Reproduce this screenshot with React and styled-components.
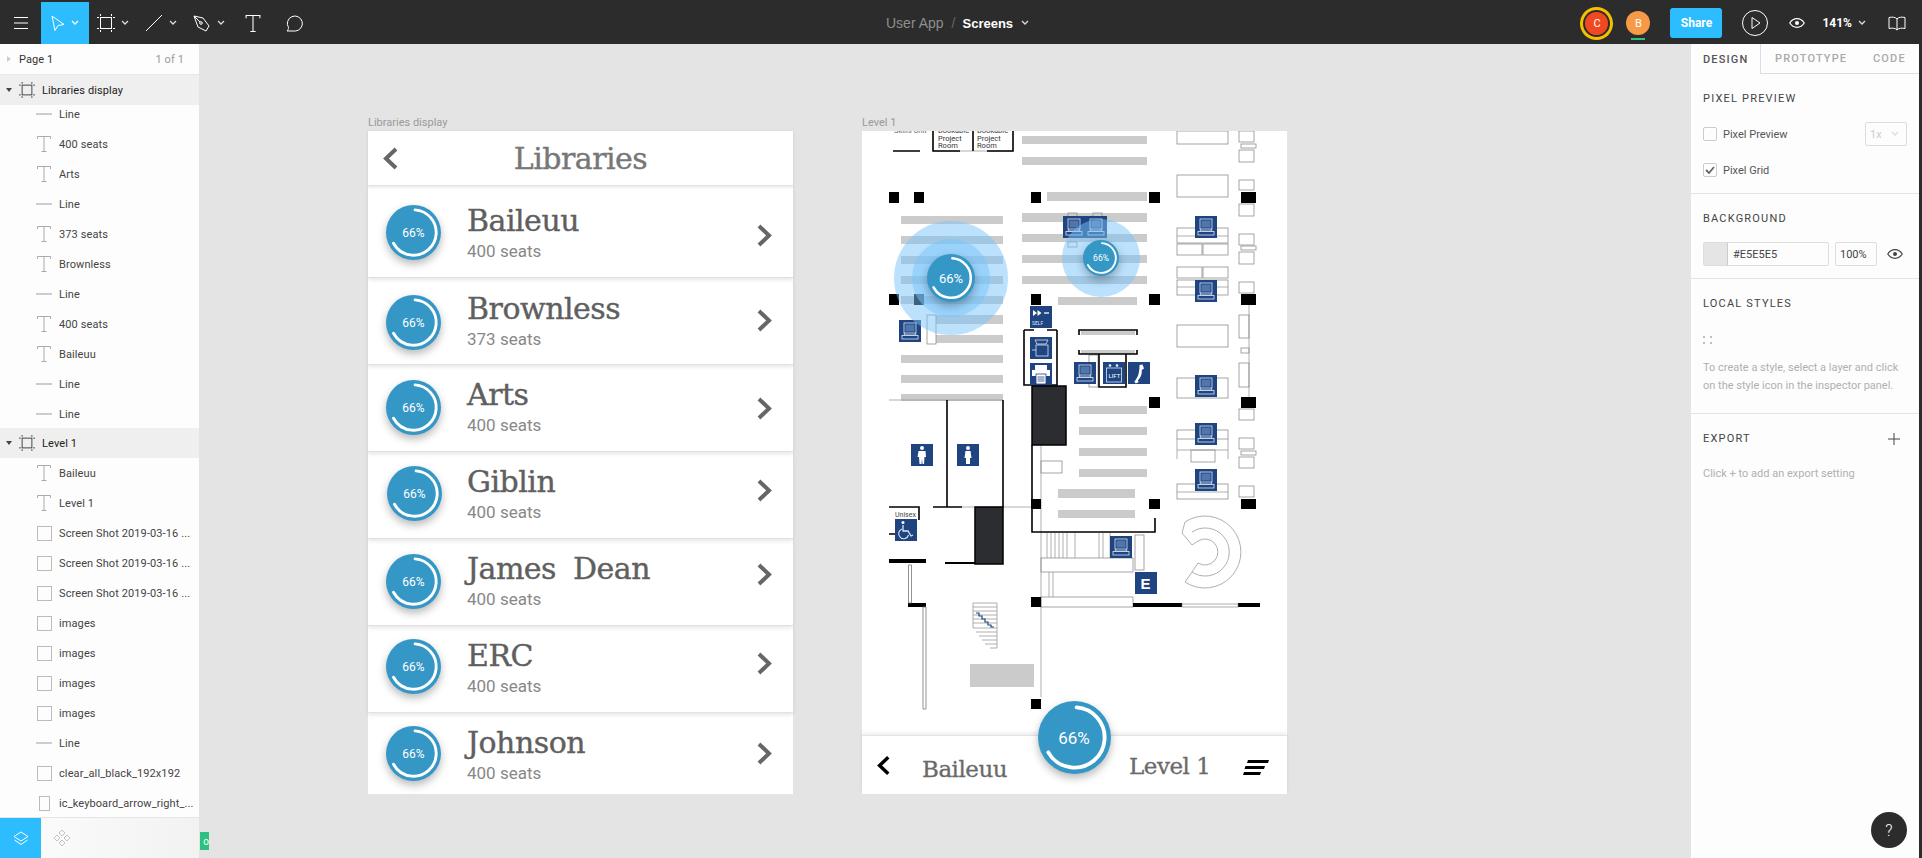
import styled, { createGlobalStyle } from 'styled-components';

const GlobalStyle = createGlobalStyle`
  html, body {
    margin: 0;
    height: 100%;
    overflow: hidden;
    background: #e5e5e5;
    font-family: Roboto, 'Liberation Sans', sans-serif;
  }
  #root {
    height: 100%;
  }
`;

const BLUE = '#3597c6';
const SLAB = "'DejaVu Serif', 'Liberation Serif', serif";

/* ---------- icons ---------- */

const Caret = ({ color = '#ddd' }) => (
  <svg width="8" height="6" viewBox="0 0 8 6" fill="none" stroke={color} strokeWidth="1.3">
    <path d="M1 1l3 3 3-3" />
  </svg>
);

const FrameIcon = ({ color = '#fff', size = 18 }) => (
  <svg width={size} height={size} viewBox="0 0 18 18" fill="none" stroke={color} strokeWidth="1">
    <rect x="3.5" y="3.5" width="11" height="11" />
    <path d="M3.5 0v2M14.5 0v2M3.5 16v2M14.5 16v2M0 3.5h2M0 14.5h2M16 3.5h2M16 14.5h2" />
  </svg>
);

const TIcon = ({ color = '#fff', size = 16, h = 17 }) => (
  <svg width={size} height={h} viewBox="0 0 14 16" fill="none" stroke={color} strokeWidth="1">
    <path d="M.5 3V.5h13V3M7 .5v15M4.5 15.5h5" />
  </svg>
);

const EyeIcon = ({ color = '#fff' }) => (
  <svg width="16" height="10" viewBox="0 0 16 10" fill="none" stroke={color} strokeWidth="1.2">
    <path d="M.8 5C2.5 2.2 5 .7 8 .7s5.5 1.5 7.2 4.3C13.5 7.8 11 9.3 8 9.3S2.5 7.8.8 5z" />
    <circle cx="8" cy="5" r="2" fill={color} stroke="none" />
  </svg>
);

const Chevron = ({ dir = 'right', color = '#666', width = 15, height = 23, stroke = 4 }) => (
  <svg width={width} height={height} viewBox="0 0 15 23" fill="none" stroke={color} strokeWidth={stroke}>
    <path d={dir === 'right' ? 'M2 2l10 9.5L2 21' : 'M13 2L3 11.5 13 21'} />
  </svg>
);

/* ---------- top bar ---------- */

const TopBar = styled.header`
  height: 42px;
  padding-top: 2px;
  background: #2c2c2c;
  display: flex;
  align-items: stretch;
  color: #fff;
  position: relative;
`;

const ToolButton = styled.div`
  width: ${(p) => p.$w}px;
  display: flex;
  align-items: center;
  justify-content: center;
  gap: 6px;
  background: ${(p) => (p.$active ? '#2dbdff' : 'transparent')};
`;

const Crumbs = styled.div`
  position: absolute;
  left: 886px;
  top: 2px;
  height: 42px;
  display: flex;
  align-items: center;
  font-family: 'Liberation Sans', Arial, sans-serif;
  font-size: 14px;
  color: #8f8f8f;
`;

const CrumbSlash = styled.span`
  margin: 0 7px 0 8px;
  color: #666;
`;

const CrumbCurrent = styled.span`
  color: #fff;
  font-weight: 700;
  margin-right: 8px;
  font-size: 13px;
`;

const TopRight = styled.div`
  margin-left: auto;
  padding-right: 16px;
  display: flex;
  align-items: center;
`;

const Avatar = styled.div`
  width: ${(p) => p.$size}px;
  height: ${(p) => p.$size}px;
  border-radius: 50%;
  background: ${(p) => p.$bg};
  color: #fff;
  font-size: 11px;
  display: flex;
  align-items: center;
  justify-content: center;
  box-sizing: border-box;
  position: relative;
  margin-right: ${(p) => p.$mr}px;
  ${(p) => p.$ring && 'box-shadow: 0 0 0 2px #2c2c2c, 0 0 0 5px #f6c000;'}
`;

const Presence = styled.span`
  position: absolute;
  left: 5px;
  bottom: -5px;
  width: 14px;
  height: 2px;
  background: #2dc17f;
`;

const ShareButton = styled.div`
  width: 52px;
  height: 30px;
  border-radius: 3px;
  background: #2dbdff;
  color: #fff;
  font-size: 12px;
  font-weight: 700;
  display: flex;
  align-items: center;
  justify-content: center;
  margin-right: 20px;
`;

const PlayGlyph = styled.svg`
  margin-right: 21px;
`;

const Zoom = styled.div`
  font-size: 12px;
  font-weight: 700;
  display: flex;
  align-items: center;
  gap: 6px;
  margin: 0 22px 0 17px;
`;

/* ---------- layout ---------- */

const Page = styled.div`
  height: 858px;
  width: 1922px;
  overflow: hidden;
  display: flex;
  flex-direction: column;
  background: #2c2c2c;
`;

const Main = styled.div`
  flex: 1;
  display: flex;
  min-height: 0;
  margin-right: 3px;
`;

/* ---------- layers panel ---------- */

const LayersPanel = styled.aside`
  width: 199px;
  background: #fdfdfd;
  display: flex;
  flex-direction: column;
  font-size: 11px;
  color: #444;
  letter-spacing: 0.1px;
`;

const PageRow = styled.div`
  height: 30px;
  flex: none;
  display: flex;
  align-items: center;
  padding: 0 15px 0 7px;
  border-bottom: 1px solid #e8e8e8;
`;

const PageName = styled.span`
  margin-left: 8px;
  color: #333;
  flex: 1;
`;

const PageCount = styled.span`
  color: #999;
`;

const LayerList = styled.div`
  flex: 1;
  min-height: 0;
  overflow: hidden;
`;

const FrameRow = styled.div`
  height: 30px;
  background: #efefef;
  display: flex;
  align-items: center;
  padding-left: 6px;
  gap: 7px;
  color: #222;
  position: relative;
  z-index: 1;
  margin-top: ${(p) => (p.$first ? 0 : -1)}px;
`;

const LayerRow = styled.div`
  height: 30px;
  display: flex;
  align-items: center;
  padding-left: 36px;
  margin-top: ${(p) => (p.$first ? -6 : 0)}px;
  white-space: nowrap;
`;

const LayerGlyph = styled.span`
  width: 16px;
  display: flex;
  justify-content: center;
  margin-right: 7px;
`;

const LineGlyph = styled.span`
  width: 16px;
  height: 2px;
  background: #ccc;
`;

const RectGlyph = styled.span`
  width: ${(p) => (p.$narrow ? 11 : 15)}px;
  height: 15px;
  border: 1.5px solid #bbb;
  box-sizing: border-box;
`;

const PanelFooter = styled.div`
  height: 40px;
  flex: none;
  display: flex;
  border-top: 1px solid #e5e5e5;
  background: linear-gradient(90deg, #fdfdfd, #f2f2f2);
`;

const FooterTab = styled.div`
  width: 41px;
  display: flex;
  align-items: center;
  justify-content: center;
  background: ${(p) => (p.$active ? '#2dbdff' : 'transparent')};
`;

const layers = [
  ['line', 'Line'],
  ['text', '400 seats'],
  ['text', 'Arts'],
  ['line', 'Line'],
  ['text', '373 seats'],
  ['text', 'Brownless'],
  ['line', 'Line'],
  ['text', '400 seats'],
  ['text', 'Baileuu'],
  ['line', 'Line'],
  ['line', 'Line'],
];

const levelLayers = [
  ['text', 'Baileuu'],
  ['text', 'Level 1'],
  ['rect', 'Screen Shot 2019-03-16 ...'],
  ['rect', 'Screen Shot 2019-03-16 ...'],
  ['rect', 'Screen Shot 2019-03-16 ...'],
  ['rect', 'images'],
  ['rect', 'images'],
  ['rect', 'images'],
  ['rect', 'images'],
  ['line', 'Line'],
  ['rect', 'clear_all_black_192x192'],
  ['narrow', 'ic_keyboard_arrow_right_...'],
];

const Layer = ({ kind, name, first }) => (
  <LayerRow $first={first}>
    <LayerGlyph>
      {kind === 'line' && <LineGlyph />}
      {kind === 'text' && <TIcon color="#aaa" size={14} h={16} />}
      {kind === 'rect' && <RectGlyph />}
      {kind === 'narrow' && <RectGlyph $narrow />}
    </LayerGlyph>
    <span>{name}</span>
  </LayerRow>
);

const FrameLayer = ({ name, first }) => (
  <FrameRow $first={first}>
    <svg width="6" height="4" viewBox="0 0 6 4">
      <path d="M0 0h6L3 4z" fill="#444" />
    </svg>
    <FrameIcon color="#333" size={16} />
    <span>{name}</span>
  </FrameRow>
);

/* ---------- canvas ---------- */

const Canvas = styled.main`
  flex: 1;
  min-width: 0;
  background: #e4e4e4;
  padding: 71px 0 0 169px;
  display: flex;
  gap: 69px;
  align-items: flex-start;
  position: relative;
`;

const Artboard = styled.section`
  width: 425px;
`;

const ArtboardLabel = styled.div`
  height: 16px;
  line-height: 16px;
  font-size: 11px;
  color: #9a9a9a;
`;

const Screen = styled.div`
  height: 663px;
  background: #fff;
  display: flex;
  flex-direction: column;
  position: relative;
`;

const ListHeader = styled.div`
  height: 54px;
  flex: none;
  display: flex;
  align-items: center;
  justify-content: center;
  position: relative;
  border-bottom: 1px solid #e6e6e6;
  box-shadow: 0 1px 3px rgba(0, 0, 0, 0.12);
`;

const BackLink = styled.span`
  position: absolute;
  left: 15px;
  top: 16px;
  display: flex;
`;

const ListTitle = styled.h1`
  margin: 0;
  font: 400 30px ${SLAB};
  letter-spacing: -0.5px;
  -webkit-text-stroke: 0.4px #777;
  color: #777;
`;

const LibraryRow = styled.div`
  height: ${(p) => p.$h}px;
  flex: none;
  box-sizing: border-box;
  display: flex;
  align-items: flex-start;
  padding: 0 21px 0 ${(p) => p.$inset}px;
  border-bottom: ${(p) => (p.$last ? 0 : '1px solid #e3e3e3')};
  box-shadow: ${(p) => (p.$last ? 'none' : '0 2px 4px rgba(0, 0, 0, 0.1)')};
  position: relative;
`;

const RingSlot = styled.div`
  margin-top: ${(p) => p.$top}px;
`;

const ChevronSlot = styled.div`
  margin-top: ${(p) => p.$top}px;
`;

const RingBox = styled.div`
  width: ${(p) => p.$size}px;
  height: ${(p) => p.$size}px;
  flex: none;
  position: relative;
  border-radius: 50%;
  background: ${BLUE};
  box-shadow: 0 4px 9px rgba(0, 0, 0, 0.28);
  display: flex;
  align-items: center;
  justify-content: center;
  color: #fff;
  font-size: ${(p) => p.$font}px;
`;

const RingArc = styled.svg`
  position: absolute;
  inset: 0;
`;

const Ring = ({ size = 55, font = 12 }) => (
  <RingBox $size={size} $font={font}>
    <RingArc width={size} height={size} viewBox="0 0 55 55" fill="none">
      <circle
        cx="27.5"
        cy="27.5"
        r="22.7"
        stroke="#fff"
        strokeWidth="2.9"
        pathLength="100"
        strokeDasharray="66 100"
        strokeLinecap="round"
        transform="rotate(-86 27.5 27.5)"
      />
    </RingArc>
    66%
  </RingBox>
);

const RowText = styled.div`
  margin: ${(p) => p.$top}px 0 0 ${(p) => p.$gap}px;
  flex: 1;
  display: flex;
  flex-direction: column;
`;

const RowName = styled.div`
  font: 400 30px/34px ${SLAB};
  letter-spacing: -0.5px;
  word-spacing: 8px;
  -webkit-text-stroke: 0.4px #5f5f5f;
  color: #5f5f5f;
`;

const RowSeats = styled.div`
  font-size: 17px;
  line-height: 20px;
  color: #888;
  margin-top: 3px;
`;

const libraries = [
  { name: 'Baileuu', seats: '400 seats', h: 92, ring: 19, text: 18, chev: 38 },
  { name: 'Brownless', seats: '373 seats', h: 87, ring: 17, text: 14, chev: 31 },
  { name: 'Arts', seats: '400 seats', h: 87, ring: 15, text: 13, chev: 32 },
  { name: 'Giblin', seats: '400 seats', h: 87, ring: 14, text: 13, chev: 27, inset: 19 },
  { name: 'James Dean', seats: '400 seats', h: 87, ring: 15, text: 13, chev: 24 },
  { name: 'ERC', seats: '400 seats', h: 87, ring: 13, text: 13, chev: 26 },
  { name: 'Johnson', seats: '400 seats', h: 82, ring: 13, text: 13, chev: 29, last: true },
];

/* ---------- floor plan ---------- */

const MapArea = styled.div`
  height: 604px;
  flex: none;
  position: relative;
  overflow: hidden;
`;

const MapDrawing = styled.svg`
  display: block;
`;

const MapBar = styled.div`
  flex: 1;
  display: flex;
  align-items: center;
  padding-left: 15px;
  border-top: 1px solid #e4e4e4;
  box-shadow: 0 -2px 4px rgba(0, 0, 0, 0.08);
  position: relative;
`;

const MapBarTitle = styled.div`
  font: 400 23px ${SLAB};
  letter-spacing: -0.5px;
  -webkit-text-stroke: 0.3px #6a6a6a;
  color: #6a6a6a;
  margin-left: ${(p) => p.$ml}px;
  padding-top: ${(p) => p.$down}px;
`;

const MenuSlot = styled.div`
  display: flex;
  margin-left: 33px;
  padding-top: 4px;
`;

const Heat = styled.div`
  position: absolute;
  left: ${(p) => p.$x - 862 - p.$r}px;
  top: ${(p) => p.$y - 131 - p.$r}px;
  width: ${(p) => p.$r * 2}px;
  height: ${(p) => p.$r * 2}px;
  border-radius: 50%;
  background: rgba(120, 195, 250, 0.5);
  display: flex;
  align-items: center;
  justify-content: center;
`;

const HeatCore = styled.div`
  width: 78px;
  height: 78px;
  border-radius: 50%;
  background: rgba(120, 195, 250, 0.5);
  display: flex;
  align-items: center;
  justify-content: center;
`;

const BigRing = styled.div`
  position: absolute;
  left: 175.5px;
  top: 570px;
  z-index: 2;
`;

const MenuLines = () => (
  <svg width="26" height="15" viewBox="0 0 26 15" fill="#000">
    <path d="M5 0h21l-1 3H4zM2.5 6H22l-1 3H1.5zM1 12h17l-1 3H0z" />
  </svg>
);

const greyBars = [
  [1022, 136, 125, 8], [1022, 157, 125, 8], [1047, 192, 100, 9], [1022, 213, 125, 9],
  [1022, 234, 125, 8], [1022, 255, 125, 8], [1022, 276, 125, 8], [1058, 297, 79, 8],
  [901, 216, 102, 8], [901, 236, 102, 8], [901, 256, 102, 8], [901, 276, 102, 8],
  [901, 296, 102, 8], [936, 315, 67, 9], [936, 335, 67, 8], [901, 355, 102, 8],
  [901, 375, 102, 8], [901, 394, 102, 7], [1079, 406, 68, 8], [1079, 427, 68, 8],
  [1079, 448, 68, 8], [1079, 469, 68, 8], [1058, 489, 77, 9], [1058, 510, 77, 8],
  [970, 664, 64, 23], [1081, 331, 54, 4], [1081, 350, 54, 4],
];

const pillars = [
  [889, 192, 10, 11], [914, 192, 10, 11], [1031, 192, 10, 11], [1149, 192, 11, 11], [1241, 192, 15, 11],
  [889, 294, 10, 11], [914, 294, 10, 11], [1031, 294, 10, 11], [1149, 294, 11, 11], [1241, 294, 15, 11],
  [1149, 397, 11, 11], [1241, 397, 15, 11], [1031, 499, 10, 10], [1149, 499, 11, 10], [1241, 499, 15, 10],
  [1031, 597, 10, 10], [1031, 699, 10, 10],
];

const outlines = [
  [1177, 131, 51, 13], [1177, 175, 51, 22], [1177, 228, 51, 15], [1177, 244, 25, 11], [1203, 244, 25, 11],
  [1177, 267, 25, 11], [1203, 267, 25, 11], [1177, 280, 51, 15], [1177, 325, 51, 22], [1177, 378, 51, 20],
  [1239, 131, 15, 11], [1241, 144, 15, 4], [1239, 150, 15, 12], [1239, 180, 15, 10], [1239, 204, 15, 12],
  [1239, 234, 15, 11], [1241, 246, 15, 4], [1239, 252, 15, 12], [1239, 282, 15, 11], [1239, 315, 10, 23],
  [1241, 348, 8, 5], [1239, 363, 10, 24], [1239, 409, 15, 11], [1239, 438, 15, 11], [1241, 451, 15, 4],
  [1239, 457, 15, 11], [1239, 486, 15, 11], [927, 315, 9, 29], [1041, 461, 21, 12], [1177, 430, 51, 9],
  [1191, 450, 24, 12], [1177, 484, 51, 15], [1041, 558, 92, 14], [1041, 597, 92, 10], [1135, 535, 9, 35],
  [1068, 213, 9, 4], [1093, 213, 9, 4], [1068, 242, 9, 5], [1089, 355, 9, 32],
];

const thinLines =
  'M1177 236h51M1177 287h51M1177 439v20M1228 439v20M1177 450h51M1177 492h51M1249 305v92M1041 445v252M889 400h114M933 151h80M962 507h70' +
  'M1047 533v25M1051 533v25M1055 533v25M1059 533v25M1063 533v25M1067 533v25M1075 533v25M1099 533v25M1103 533v25M1110 533v25M1049 572v25M1053 572v25' +
  'M973 603v25M997 603v45M973 603h24M973 607h24M973 611h24M973 615h24M973 619h24M973 623h24M973 628h24M976 632h21M979 636h18M982 640h15M985 644h12M990 648h7' +
  'M1185 522A36 36 0 1 1 1185 582M1192 532A24 24 0 1 1 1192 572M1198 541A13 13 0 1 1 1198 563' +
  'M1185 522l-3 11 10 12 6-4M1185 582l7-10 6-9';

const walls =
  'M893 151h27M933 131v20h27M973 131v20M987 151h26V131M1024 330v55h33V330M1024 330h10M1047 330h10M1079 335v-5h58v5M1079 350v4h58v-4' +
  'M1099 354v33h27v-33M947 400v107M1003 400v107M889 507h30v13M933 507h29M889 534h6M1032 445v87h123v-14';

const MapTile = ({ x, y, children }) => (
  <g transform={`translate(${x} ${y})`}>
    <rect width="22" height="22" fill="#1f4480" />
    <g stroke="#dbe6f5" strokeWidth="0.8" fill="none">{children}</g>
  </g>
);

const Pc = ({ x, y }) => (
  <MapTile x={x} y={y}>
    <rect x="5" y="3" width="12" height="10" />
    <rect x="6.5" y="4.5" width="9" height="7" fill="#4f76ad" stroke="none" />
    <path d="M6 13l-1 2h12l-1-2" />
    <rect x="3" y="15.5" width="16" height="3.5" />
  </MapTile>
);

const computers = [
  [899, 320], [1063, 216], [1085, 216], [1195, 216], [1195, 280], [1074, 362], [1195, 375], [1195, 423],
  [1195, 469], [1110, 536],
];

const FloorPlan = () => (
  <MapDrawing width="425" height="604" viewBox="862 131 425 604">
    {greyBars.map(([x, y, w, h], i) => (
      <rect key={i} x={x} y={y} width={w} height={h} fill="#cbcbcb" />
    ))}
    {outlines.map(([x, y, w, h], i) => (
      <rect key={i} x={x} y={y} width={w} height={h} fill="none" stroke="#8e8e8e" strokeWidth="0.8" />
    ))}
    <path d={thinLines} fill="none" stroke="#8e8e8e" strokeWidth="0.7" />
    <path d={walls} fill="none" stroke="#000" strokeWidth="1.6" />
    <path d="M889 559h37v4h-37zM945 562h30v2h-30zM908 603h18v4h-18zM1133 603h49v4h-49zM1238 603h22v4h-22z" fill="#000" />
    <path d="M908.5 565h3v38h-3zM923 607h3v102h-3z" fill="#fff" stroke="#777" strokeWidth="0.8" />
    <rect x="1182" y="604" width="56" height="3" fill="#fff" stroke="#777" strokeWidth="0.6" />
    <rect x="1032" y="386" width="34" height="59" fill="#2b2d30" stroke="#000" strokeWidth="1.5" />
    <rect x="975" y="507" width="28" height="57" fill="#2b2d30" stroke="#000" strokeWidth="1.5" />
    {pillars.map(([x, y, w, h], i) => (
      <rect key={i} x={x} y={y} width={w} height={h} fill="#000" />
    ))}
    <path d="M976 613h3v3h3v3h3v3h3v3h3v2h3" fill="none" stroke="#1f4480" strokeWidth="1.2" />
    <g fontFamily="Roboto, sans-serif" fontSize="7.5" fill="#333">
      <text x="938" y="133">Bookable</text>
      <text x="938" y="141">Project</text>
      <text x="938" y="148">Room</text>
      <text x="977" y="133">Bookable</text>
      <text x="977" y="141">Project</text>
      <text x="977" y="148">Room</text>
      <text x="894" y="133" fill="#666">Skills Unit</text>
      <text x="895" y="517" fill="#444" fontSize="7">Unisex</text>
    </g>
    {computers.map(([x, y], i) => (
      <Pc key={i} x={x} y={y} />
    ))}
    <MapTile x={1030} y={306}>
      <path d="M3 4v6l4-3zM7.5 4v6l4-3z" fill="#fff" stroke="none" />
      <path d="M14 7h5" strokeWidth="1.5" />
      <text x="2" y="19" fontSize="5" fontFamily="Roboto, sans-serif" fill="#dbe6f5" stroke="none">SELF</text>
    </MapTile>
    <MapTile x={1030} y={337}>
      <path d="M5 3h13l-2 4H7z" />
      <rect x="6" y="8" width="12" height="11" />
      <path d="M2 13h4" />
    </MapTile>
    <MapTile x={1030} y={363}>
      <rect x="5" y="2" width="12" height="5" fill="#fff" stroke="none" />
      <rect x="2" y="7" width="18" height="6" fill="#fff" stroke="none" />
      <rect x="6" y="11" width="10" height="10" fill="#fff" stroke="#1f4480" />
      <path d="M7.5 14h7M7.5 16h7M7.5 18h7" stroke="#1f4480" />
    </MapTile>
    <MapTile x={1103} y={362}>
      <circle cx="7" cy="3.5" r="1" fill="#fff" />
      <circle cx="14" cy="3.5" r="1" fill="#fff" />
      <rect x="3.5" y="6" width="15" height="14" />
      <text x="5.5" y="15.5" fontSize="6" fontFamily="Roboto, sans-serif" fill="#fff" stroke="none">LIFT</text>
    </MapTile>
    <MapTile x={1128} y={362}>
      <path
        d="M11.5 3l3-.5 1.5 4-2.2 1.5c.3 4-1 8-4 10.5l1 1.5-3 1.5-1.5-2c4-4 5.5-10 5.2-18.5z"
        fill="#fff"
        stroke="none"
      />
    </MapTile>
    <MapTile x={911} y={444}>
      <circle cx="11" cy="4" r="2" fill="#fff" stroke="none" />
      <path d="M7.5 7h7l.5 6h-1.5l-.5 7h-1.5l-.5-5-.5 5H8.5L8 13H6.5z" fill="#fff" stroke="none" />
    </MapTile>
    <MapTile x={957} y={444}>
      <circle cx="11" cy="4" r="2" fill="#fff" stroke="none" />
      <path d="M8.5 7h5l1 7h-1.5v6h-4v-6H7.500z" fill="#fff" stroke="none" />
    </MapTile>
    <MapTile x={895} y={519}>
      <circle cx="8" cy="3.5" r="1.5" fill="#fff" stroke="none" />
      <path d="M8 6v6h5l3 5 2-1" strokeWidth="1.3" />
      <path d="M7 10a5 5 0 1 0 6.5 6" strokeWidth="1.1" />
    </MapTile>
    <MapTile x={1135} y={572}>
      <text x="5.5" y="17" fontSize="15" fontWeight="700" fontFamily="'Liberation Sans', sans-serif" fill="#fff" stroke="none">E</text>
    </MapTile>
  </MapDrawing>
);

/* ---------- inspector ---------- */

const Inspector = styled.aside`
  width: 228px;
  background: #fdfdfd;
  font-size: 11px;
  color: #555;
  position: relative;
`;

const TabRow = styled.div`
  height: 30px;
  display: flex;
  font-size: 11px;
  font-weight: 500;
  letter-spacing: 1.15px;
`;

const Tab = styled.div`
  width: ${(p) => p.$w}px;
  padding-left: ${(p) => p.$pad}px;
  box-sizing: border-box;
  display: flex;
  align-items: center;
  color: ${(p) => (p.$active ? '#555' : '#aaa')};
  ${(p) => (p.$active ? 'border-right: 1px solid #ddd;' : 'border-bottom: 1px solid #ddd;')}
`;

const Section = styled.section`
  height: ${(p) => p.$h}px;
  box-sizing: border-box;
  padding: 0 12px;
  border-bottom: ${(p) => (p.$open ? 0 : '1px solid #e4e4e4')};
`;

const SectionHead = styled.h2`
  margin: 0;
  height: 49px;
  display: flex;
  align-items: center;
  justify-content: space-between;
  font-size: 11px;
  font-weight: 400;
  letter-spacing: 1.2px;
  color: #444;
`;

const CheckList = styled.div`
  margin-top: -7px;
`;

const CheckRow = styled.div`
  height: 36px;
  display: flex;
  align-items: center;
  gap: 6px;
`;

const CheckBox = styled.span`
  width: 14px;
  height: 14px;
  box-sizing: border-box;
  border: 1px solid #ccc;
  border-radius: 2px;
  display: flex;
  align-items: center;
  justify-content: center;
`;

const ScaleSelect = styled.span`
  margin-left: auto;
  width: 42px;
  height: 24px;
  box-sizing: border-box;
  border: 1px solid #ddd;
  border-radius: 2px;
  color: #ccc;
  display: flex;
  align-items: center;
  justify-content: space-between;
  padding: 0 7px 0 4px;
`;

const FieldRow = styled.div`
  display: flex;
  align-items: center;
  height: 24px;
  margin-top: -1px;
  color: #444;
`;

const ColorField = styled.div`
  width: 126px;
  height: 24px;
  box-sizing: border-box;
  border: 1px solid #ddd;
  border-radius: 2px;
  display: flex;
  align-items: center;
`;

const Swatch = styled.span`
  width: 23px;
  height: 22px;
  background: #e5e5e5;
  border-right: 1px solid #ccc;
  margin-right: 5px;
`;

const Percent = styled.div`
  width: 42px;
  height: 24px;
  box-sizing: border-box;
  border: 1px solid #ddd;
  border-radius: 2px;
  margin: 0 10px 0 6px;
  display: flex;
  align-items: center;
  padding-left: 4px;
`;

const HintText = styled.p`
  margin: ${(p) => p.$top}px 0 0;
  font-size: 11px;
  line-height: 18px;
  color: #b0b0b0;
`;

const DragDots = styled.span`
  display: grid;
  width: 9px;
  grid-template-columns: 2px 2px;
  gap: 4px 5px;
  margin-top: 8px;
  & > i {
    width: 2px;
    height: 2px;
    border-radius: 50%;
    background: #aaa;
  }
`;

const PlusGlyph = styled.svg`
  margin-right: 7px;
`;

const HelpButton = styled.div`
  position: absolute;
  right: 12px;
  bottom: 10px;
  width: 36px;
  height: 36px;
  border-radius: 50%;
  background: #2c2c2c;
  color: #fff;
  font-size: 16px;
  font-weight: 300;
  display: flex;
  align-items: center;
  justify-content: center;
`;

const GreenTag = styled.div`
  position: absolute;
  left: 1px;
  top: calc(100% - 26px);
  width: 9px;
  height: 18px;
  background: #2dc17f;
  color: #fff;
  font-size: 10px;
  overflow: hidden;
  display: flex;
  align-items: center;
  justify-content: flex-end;
`;

export default function App() {
  return (
    <Page>
      <GlobalStyle />
      <TopBar>
        <ToolButton $w={41}>
          <svg width="14" height="12" viewBox="0 0 14 12" stroke="#fff" strokeWidth="1">
            <path d="M0 .5h14M0 6h14M0 11.5h14" />
          </svg>
        </ToolButton>
        <ToolButton $w={48} $active>
          <svg width="14" height="16" viewBox="0 0 14 16" fill="none" stroke="#fff" strokeWidth="1">
            <path d="M1 1l12 8.5-6 1-3 5z" />
          </svg>
          <Caret color="#fff" />
        </ToolButton>
        <ToolButton $w={48}>
          <FrameIcon />
          <Caret />
        </ToolButton>
        <ToolButton $w={48}>
          <svg width="18" height="18" viewBox="0 0 18 18" stroke="#fff" strokeWidth="1">
            <path d="M1 17L17 1" />
          </svg>
          <Caret />
        </ToolButton>
        <ToolButton $w={48}>
          <svg width="18" height="18" viewBox="0 0 18 18" fill="none" stroke="#fff" strokeWidth="1">
            <path d="M1 2l9 2 6 8-3 5-8-4z" />
            <path d="M1 2l6 6" />
            <circle cx="8" cy="9" r="1.3" />
          </svg>
          <Caret />
        </ToolButton>
        <ToolButton $w={40}>
          <TIcon />
        </ToolButton>
        <ToolButton $w={44}>
          <svg width="18" height="17" viewBox="0 0 18 17" fill="none" stroke="#fff" strokeWidth="1">
            <path d="M1 16c1-1 1.5-2 1.5-3.5A7.5 7.5 0 1 1 9.5 16z" />
          </svg>
        </ToolButton>
        <Crumbs>
          User App
          <CrumbSlash>/</CrumbSlash>
          <CrumbCurrent>Screens</CrumbCurrent>
          <Caret />
        </Crumbs>
        <TopRight>
          <Avatar $size={23} $bg="#f24822" $ring $mr={18}>C</Avatar>
          <Avatar $size={24} $bg="#f79a48" $mr={20}>
            B
            <Presence />
          </Avatar>
          <ShareButton>Share</ShareButton>
          <PlayGlyph width="26" height="26" viewBox="0 0 26 26" fill="none" stroke="#fff" strokeWidth="1">
            <circle cx="13" cy="13" r="12.5" />
            <path d="M10 7.5l8 5.5-8 5.5z" />
          </PlayGlyph>
          <EyeIcon />
          <Zoom>
            141%
            <Caret />
          </Zoom>
          <svg width="18" height="15" viewBox="0 0 18 15" fill="none" stroke="#fff" strokeWidth="1">
            <path d="M9 3C7.5 1 4 .8 1 1.5v11c3-.7 6.5-.5 8 1.5 1.5-2 5-2.2 8-1.5v-11C14 .8 10.5 1 9 3zM9 3v11" />
          </svg>
        </TopRight>
      </TopBar>
      <Main>
        <LayersPanel>
          <PageRow>
            <svg width="4" height="6" viewBox="0 0 4 6">
              <path d="M0 0l4 3-4 3z" fill="#ccc" />
            </svg>
            <PageName>Page 1</PageName>
            <PageCount>1 of 1</PageCount>
          </PageRow>
          <LayerList>
            <FrameLayer name="Libraries display" first />
            {layers.map(([kind, name], i) => (
              <Layer key={i} kind={kind} name={name} first={i === 0} />
            ))}
            <FrameLayer name="Level 1" />
            {levelLayers.map(([kind, name], i) => (
              <Layer key={i} kind={kind} name={name} />
            ))}
          </LayerList>
          <PanelFooter>
            <FooterTab $active>
              <svg width="16" height="15" viewBox="0 0 16 15" fill="none" stroke="#fff" strokeWidth="1">
                <path d="M8 1l7 4.5L8 10 1 5.500zM1.5 9L8 13.5 14.500 9" />
              </svg>
            </FooterTab>
            <FooterTab>
              <svg width="18" height="18" viewBox="0 0 18 18" fill="none" stroke="#c4c4c4" strokeWidth="1">
                <path d="M9 1l3 3-3 3-3-3zM4 6l3 3-3 3-3-3zM14 6l3 3-3 3-3-3zM9 11l3 3-3 3-3-3z" />
              </svg>
            </FooterTab>
          </PanelFooter>
        </LayersPanel>
        <Canvas>
          <GreenTag>o</GreenTag>
          <Artboard>
            <ArtboardLabel>Libraries display</ArtboardLabel>
            <Screen>
              <ListHeader>
                <BackLink>
                  <Chevron dir="left" />
                </BackLink>
                <ListTitle>Libraries</ListTitle>
              </ListHeader>
              {libraries.map((lib) => (
                <LibraryRow key={lib.name} $h={lib.h} $inset={lib.inset || 18} $last={lib.last}>
                  <RingSlot $top={lib.ring}>
                    <Ring />
                  </RingSlot>
                  <RowText $top={lib.text} $gap={lib.inset ? 25 : 26}>
                    <RowName>{lib.name}</RowName>
                    <RowSeats>{lib.seats}</RowSeats>
                  </RowText>
                  <ChevronSlot $top={lib.chev}>
                    <Chevron />
                  </ChevronSlot>
                </LibraryRow>
              ))}
            </Screen>
          </Artboard>
          <Artboard>
            <ArtboardLabel>Level 1</ArtboardLabel>
            <Screen>
              <MapArea>
                <FloorPlan />
                <Heat $x={951} $y={278} $r={57}>
                  <HeatCore>
                    <Ring size={48} font={13} />
                  </HeatCore>
                </Heat>
                <Heat $x={1101} $y={258} $r={39}>
                  <Ring size={36} font={8.5} />
                </Heat>
              </MapArea>
              <MapBar>
                <Chevron dir="left" color="#000" width={13} height={21} stroke={4} />
                <MapBarTitle $ml={32} $down={7}>Baileuu</MapBarTitle>
                <MapBarTitle $ml={122} $down={1}>Level 1</MapBarTitle>
                <MenuSlot>
                  <MenuLines />
                </MenuSlot>
              </MapBar>
              <BigRing>
                <Ring size={73} font={17} />
              </BigRing>
            </Screen>
          </Artboard>
        </Canvas>
        <Inspector>
          <TabRow>
            <Tab $w={70} $pad={12} $active>DESIGN</Tab>
            <Tab $w={112} $pad={14}>PROTOTYPE</Tab>
            <Tab $w={46} $pad={0}>CODE</Tab>
          </TabRow>
          <Section $h={120}>
            <SectionHead>PIXEL PREVIEW</SectionHead>
            <CheckList>
              <CheckRow>
                <CheckBox />
                Pixel Preview
                <ScaleSelect>
                  1x
                  <Caret color="#ddd" />
                </ScaleSelect>
              </CheckRow>
              <CheckRow>
                <CheckBox>
                  <svg width="10" height="8" viewBox="0 0 10 8" fill="none" stroke="#666" strokeWidth="1.8">
                    <path d="M1 4l3 3 5-6" />
                  </svg>
                </CheckBox>
                Pixel Grid
              </CheckRow>
            </CheckList>
          </Section>
          <Section $h={85}>
            <SectionHead>BACKGROUND</SectionHead>
            <FieldRow>
              <ColorField>
                <Swatch />
                #E5E5E5
              </ColorField>
              <Percent>100%</Percent>
              <EyeIcon color="#444" />
            </FieldRow>
          </Section>
          <Section $h={135}>
            <SectionHead>LOCAL STYLES</SectionHead>
            <DragDots>
              <i /><i /><i /><i />
            </DragDots>
            <HintText $top={15}>
              To create a style, select a layer and click on the style icon in the inspector panel.
            </HintText>
          </Section>
          <Section $h={90} $open>
            <SectionHead>
              EXPORT
              <PlusGlyph width="12" height="12" viewBox="0 0 12 12" stroke="#444" strokeWidth="1">
                <path d="M6 0v12M0 6h12" />
              </PlusGlyph>
            </SectionHead>
            <HintText $top={2}>Click + to add an export setting</HintText>
          </Section>
          <HelpButton>?</HelpButton>
        </Inspector>
      </Main>
    </Page>
  );
}
